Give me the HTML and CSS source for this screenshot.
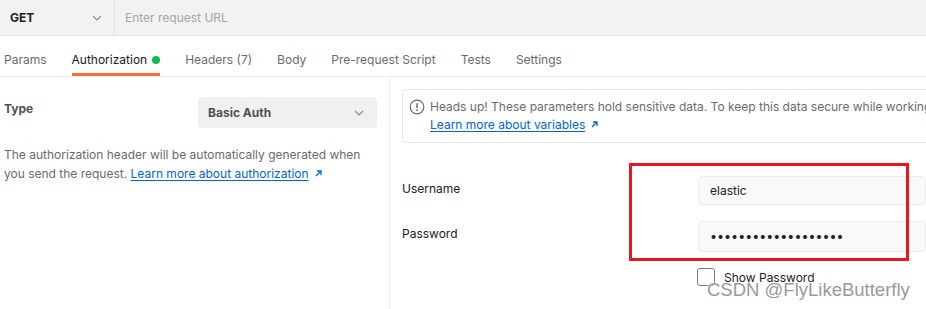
FILE: index.html
```html
<!DOCTYPE html>
<html lang="en">
<head>
    <meta charset="UTF-8">
    <title>Basic Auth</title>
    <link rel="stylesheet" href="styles.css">
</head>
<body>
    <div class="url-bar">
        <div class="method">
            <span>GET</span>
            <svg class="chevron" width="10" height="6" viewBox="0 0 10 6"><path d="M1 1l4 4 4-4" fill="none" stroke="#8c8c8c" stroke-width="1.1"/></svg>
        </div>
        <div class="url">Enter request URL</div>
    </div>

    <div class="tabs">
        <div class="tab">Params</div>
        <div class="tab active">Authorization <span class="dot"></span></div>
        <div class="tab">Headers (7)</div>
        <div class="tab">Body</div>
        <div class="tab">Pre-request Script</div>
        <div class="tab">Tests</div>
        <div class="tab">Settings</div>
    </div>

    <div class="main">
        <div class="left">
            <div class="type-row">
                <div class="type-label">Type</div>
                <div class="select">
                    <span>Basic Auth</span>
                    <svg width="10" height="6" viewBox="0 0 10 6"><path d="M1 1l4 4 4-4" fill="none" stroke="#8c8c8c" stroke-width="1.1"/></svg>
                </div>
            </div>
            <p class="desc">The authorization header will be automatically generated when you send the request. <a href="#">Learn more about authorization</a><svg class="ext" width="9" height="9" viewBox="0 0 9 9"><path d="M2 7l5-5M3 2h4v4" fill="none" stroke="#0265d2" stroke-width="1.3"/></svg></p>
        </div>

        <div class="right">
            <div class="notice">
                <svg class="warn" width="16" height="16" viewBox="0 0 16 16"><circle cx="8" cy="8" r="6.8" fill="none" stroke="#6b6b6b" stroke-width="1.2"/><path d="M8 4.3v4.6" stroke="#6b6b6b" stroke-width="1.5"/><circle cx="8" cy="11.2" r="0.9" fill="#6b6b6b"/></svg>
                <div class="notice-text">
                    Heads up! These parameters hold sensitive data. To keep this data secure while working in a collaborative environment, we recommend using variables.<br>
                    <a href="#">Learn more about variables</a><svg class="ext" width="9" height="9" viewBox="0 0 9 9"><path d="M2 7l5-5M3 2h4v4" fill="none" stroke="#0265d2" stroke-width="1.3"/></svg>
                </div>
            </div>

            <div class="field first">
                <label>Username</label>
                <input class="input" type="text" value="elastic">
            </div>
            <div class="field">
                <label>Password</label>
                <input class="input pass" type="password" value="elastic123456789abc">
            </div>
            <div class="show">
                <input type="checkbox" class="check">
                <span>Show Password</span>
            </div>
        </div>
    </div>

    <div class="mark"></div>
    <div class="watermark">CSDN @FlyLikeButterfly</div>
</body>
</html>
```

FILE: styles.css
```css
body{
    margin: 0;
    width: 926px;
    height: 309px;
    overflow: hidden;
    position: relative;
    background: #fff;
    font-family: Inter, "Noto Sans", sans-serif;
    font-size: 12px;
    color: #6b6b6b;
}
.url-bar{
    display: flex;
    height: 35px;
    background: #f2f2f2;
    border-bottom: 1px solid #e2e2e2;
}
.method{
    width: 104px;
    padding-left: 10px;
    display: flex;
    align-items: center;
    justify-content: space-between;
    border-right: 1px solid #e4e4e4;
    font-weight: 700;
    color: #212121;
}
.method .chevron{
    margin-right: 12px;
}
.url{
    display: flex;
    align-items: center;
    padding-left: 10px;
    color: #a6a6a6;
}
.tabs{
    display: flex;
    gap: 25px;
    height: 40px;
    padding-left: 4px;
    border-bottom: 1px solid #ededed;
    white-space: nowrap;
}
.tab{
    display: flex;
    align-items: center;
    padding-top: 10px;
    border-bottom: 3px solid transparent;
}
.tab.active{
    color: #212121;
    border-bottom-color: #ff6c37;
}
.dot{
    width: 8px;
    height: 8px;
    border-radius: 50%;
    background: #0cbb52;
    margin-left: 5px;
}
.main{
    display: flex;
    height: 232px;
}
.left{
    width: 373px;
    padding: 20px 12px 0 4px;
    border-right: 1px solid #ededed;
}
.type-row{
    display: flex;
    align-items: flex-start;
}
.type-label{
    width: 194px;
    padding-top: 4px;
    font-weight: 700;
    color: #505050;
}
.select{
    flex: 1;
    height: 31px;
    background: #f0f0f0;
    border-radius: 4px;
    display: flex;
    align-items: center;
    justify-content: space-between;
    padding: 0 13px 0 10px;
    font-weight: 700;
    color: #505050;
}
.desc{
    margin: 17px 0 0;
    line-height: 19px;
    width: 362px;
}
a{
    color: #0265d2;
    text-decoration: underline;
    text-underline-offset: 2px;
}
.ext{
    margin-left: 5px;
}
.right{
    flex: 1;
    padding: 12px 0 0 12px;
    overflow: hidden;
}
.notice{
    display: flex;
    gap: 5px;
    width: 600px;
    padding: 8px 6px;
    border: 1px solid #e6e6e6;
    border-radius: 4px;
    line-height: 18px;
}
.warn{
    flex: none;
    margin-top: 1px;
}
.notice-text{
    white-space: nowrap;
}
.field{
    display: flex;
    align-items: flex-start;
    margin-top: 16px;
}
.field.first{
    margin-top: 33px;
}
.field label{
    width: 296px;
    flex: none;
    padding-top: 5px;
    color: #212121;
}
.input{
    width: 300px;
    height: 29px;
    box-sizing: border-box;
    padding: 0 11px;
    border: 1px solid #ececec;
    border-radius: 4px;
    background: #f9f9f9;
    font-family: Inter, "Noto Sans", sans-serif;
    font-size: 12px;
    color: #212121;
    outline: none;
}
.input.pass{
    height: 31px;
    font-size: 12.5px;
}
.show{
    display: flex;
    align-items: center;
    gap: 9px;
    margin: 16px 0 0 295px;
    color: #212121;
}
.check{
    appearance: none;
    margin: 0;
    width: 18px;
    height: 18px;
    border: 1.5px solid #7a7a7a;
    border-radius: 3px;
    box-sizing: border-box;
}
.mark{
    position: absolute;
    left: 629px;
    top: 163px;
    width: 274px;
    height: 92px;
    border: 3px solid #e8161f;
}
.watermark{
    position: absolute;
    left: 707px;
    top: 279px;
    font-family: "Liberation Sans", Arial, sans-serif;
    font-size: 18.5px;
    color: #9a9a9a;
    text-shadow: 0 0 1px #fff, 0 0 2px #fff;
}
```
